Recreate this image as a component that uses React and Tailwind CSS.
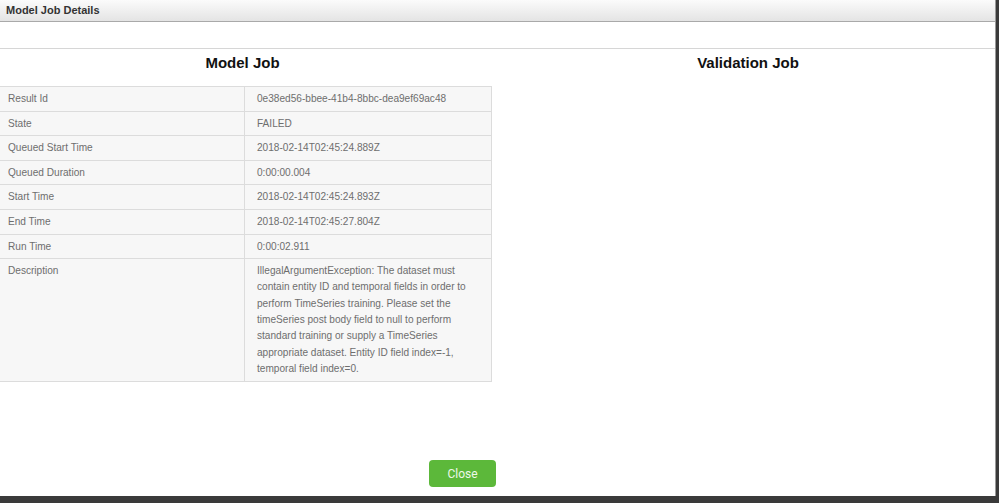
import React from "react";

const rows = [
  ["Result Id", "0e38ed56-bbee-41b4-8bbc-dea9ef69ac48"],
  ["State", "FAILED"],
  ["Queued Start Time", "2018-02-14T02:45:24.889Z"],
  ["Queued Duration", "0:00:00.004"],
  ["Start Time", "2018-02-14T02:45:24.893Z"],
  ["End Time", "2018-02-14T02:45:27.804Z"],
  ["Run Time", "0:00:02.911"],
];

const description =
  "IllegalArgumentException: The dataset must contain entity ID and temporal fields in order to perform TimeSeries training. Please set the timeSeries post body field to null to perform standard training or supply a TimeSeries appropriate dataset. Entity ID field index=-1, temporal field index=0.";

const JobTable = () => (
  <table className="w-[497px] -ml-[5px] border-collapse bg-[#f7f7f7] text-[10.1px] text-[#6e6e6e]">
    <tbody>
      {rows.map(([label, value]) => (
        <tr key={label}>
          <td className="w-[249px] border border-[#dcdcdc] pl-[12px] py-[4px] leading-[15.6px] align-top">
            {label}
          </td>
          <td className="border border-[#dcdcdc] pl-[12px] py-[4px] leading-[15.6px] align-top">
            {value}
          </td>
        </tr>
      ))}
      <tr>
        <td className="border border-[#dcdcdc] pl-[12px] pt-[4px] pb-[4px] leading-[16.3px] align-top">
          Description
        </td>
        <td className="border border-[#dcdcdc] pl-[12px] pr-[18px] pt-[4px] pb-[4px] leading-[16.3px] align-top">
          {description}
        </td>
      </tr>
    </tbody>
  </table>
);

const App = () => {
  return (
    <div className="w-[999px] h-[503px] flex flex-col overflow-hidden bg-[#3a3a3a] font-['Liberation_Sans',Arial,sans-serif]">
      <div className="flex flex-1 min-h-0">
        <div className="flex-1 flex flex-col bg-white overflow-hidden border-r border-[#9a9a9a]">
          {/* title bar */}
          <div className="h-[22px] shrink-0 bg-gradient-to-b from-[#fbfbfb] to-[#e4e4e4] border-b border-[#a9a9a9] flex items-center px-[6px]">
            <span className="text-[11px] font-bold text-[#333]">Model Job Details</span>
          </div>
          <div className="h-[27px] shrink-0 border-b border-[#d6d6d6]" />

          <div className="flex-1 flex flex-col">
            <div className="flex">
              <div className="w-[497px] flex flex-col">
                <h2 className="text-center text-[15px] font-bold text-[#111] pt-[6px] pb-[15px] pr-[12px] leading-[16px]">
                  Model Job
                </h2>
                <JobTable />
              </div>
              <div className="flex-1">
                <h2 className="text-center text-[15px] font-bold text-[#111] pt-[6px] pl-[4px] leading-[16px]">
                  Validation Job
                </h2>
              </div>
            </div>

            <div className="mt-auto pb-[9px] pl-[429px]">
              <button className="w-[67px] h-[27px] rounded-[4px] bg-[#5cb83a] text-[12px] text-[#eef8e8] font-['Roboto',Arial,sans-serif]">
                Close
              </button>
            </div>
          </div>
        </div>
        <div className="w-[3px] bg-[#3a3a3a]" />
      </div>
      <div className="h-[7px] shrink-0 bg-[#3a3a3a]" />
    </div>
  );
};

export default App;
